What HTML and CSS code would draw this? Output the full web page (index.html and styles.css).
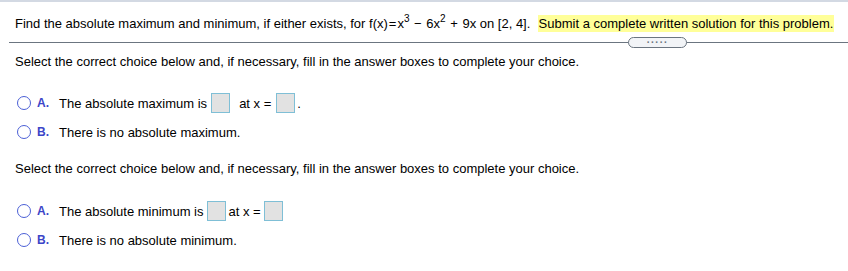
FILE: index.html
```html
<!DOCTYPE html>
<html>
<head>
<meta charset="utf-8">
<link rel="stylesheet" href="styles.css">
</head>
<body>
<div class="topbar"></div>
<div class="question">
  <p class="prompt">Find the absolute maximum and minimum, if either exists, for f(x)<span class="eq">=</span>x<sup>3</sup> <span class="op">&minus;</span> 6x<sup>2</sup> <span class="op">+</span> 9x on [2, 4]. &nbsp;<span class="hl">Submit a complete written solution for this problem.</span></p>
</div>
<div class="divider">
  <div class="pill">.....</div>
</div>
<div class="part">
  <p class="instr">Select the correct choice below and, if necessary, fill in the answer boxes to complete your choice.</p>
  <div class="choices first">
    <div class="choice">
      <span class="radio"></span><span class="letter">A.</span>
      <span class="ctext"><span>The absolute maximum is</span><span class="box bx1"></span><span class="atx1">at x =</span><span class="box bx2"></span><span>.</span></span>
    </div>
    <div class="choice">
      <span class="radio"></span><span class="letter">B.</span>
      <span class="ctext">There is no absolute maximum.</span>
    </div>
  </div>
  <p class="instr second">Select the correct choice below and, if necessary, fill in the answer boxes to complete your choice.</p>
  <div class="choices">
    <div class="choice">
      <span class="radio"></span><span class="letter">A.</span>
      <span class="ctext"><span>The absolute minimum is</span><span class="box bx3"></span><span class="atx2">at x =</span><span class="box bx4"></span></span>
    </div>
    <div class="choice">
      <span class="radio"></span><span class="letter">B.</span>
      <span class="ctext">There is no absolute minimum.</span>
    </div>
  </div>
</div>
</body>
</html>
```

FILE: styles.css
```css
html, body {
  margin: 0;
  padding: 0;
  background: #fff;
}
body {
  font-family: "Liberation Sans", Arial, sans-serif;
  font-size: 13px;
  color: #000;
  width: 848px;
  height: 271px;
  overflow: hidden;
}
.topbar {
  height: 2px;
  background: #d3d9e3;
}
.question {
  padding: 0 15px;
}
.prompt {
  margin: 0;
  padding-top: 13px;
  line-height: 18px;
  height: 22px;
  white-space: nowrap;
}
.prompt sup {
  font-size: 10px;
  line-height: 0;
  vertical-align: 6px;
}
.eq { padding: 0 1px; }
.op { padding: 0 1px; }
.hl {
  background: #ffff99;
  padding: 1px 1px;
}
.divider {
  margin-left: 9px;
  height: 1px;
  background: #6b7580;
  position: relative;
  margin-top: 5px;
}
.pill {
  position: absolute;
  left: 619px;
  top: -5px;
  width: 57px;
  height: 9px;
  border: 1px solid #6b7580;
  border-radius: 6px;
  background: #f2f4f7;
  font-size: 10px;
  font-weight: bold;
  line-height: 3px;
  text-align: center;
  color: #6b7580;
  letter-spacing: 1.5px;
}
.part {
  padding: 0 15px;
}
.instr {
  margin: 0;
  padding-top: 11px;
  line-height: 16px;
}
.instr.second {
  padding-top: 11px;
}
.choices {
  padding-top: 23px;
  padding-left: 2px;
}
.choices.first {
  padding-top: 22px;
}
.choice {
  display: flex;
  align-items: center;
  height: 22px;
  margin-bottom: 7px;
}
.radio {
  width: 12px;
  height: 12px;
  border: 1.5px solid #4b5fd6;
  border-radius: 50%;
  flex: none;
}
.letter {
  color: #3c45c8;
  font-weight: bold;
  font-size: 12px;
  margin-left: 6px;
  width: 22px;
}
.ctext {
  display: flex;
  align-items: center;
  white-space: pre;
}
.box {
  display: inline-block;
  width: 17px;
  height: 18px;
  border: 1px solid #7fbfd6;
  background: #e2e2e2;
}
.bx1 { margin: 0 9px 0 4px; }
.bx2 { margin: 0 2px 0 5px; }
.bx3 { margin: 0 3px 0 3px; }
.bx4 { margin: 0 0 0 3px; }
```
